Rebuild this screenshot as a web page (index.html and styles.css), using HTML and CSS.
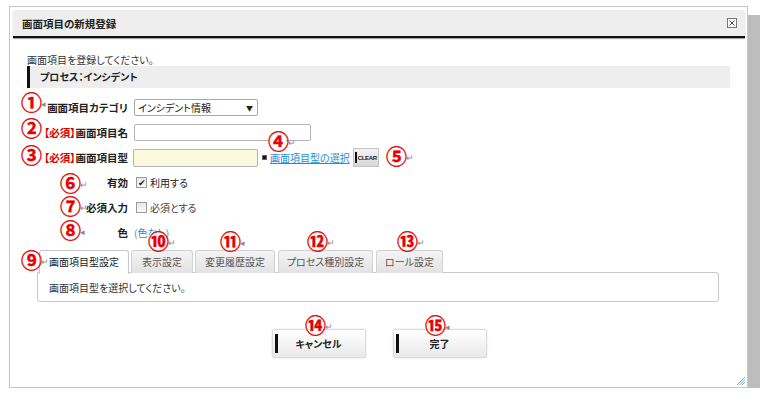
FILE: index.html
```html
<!DOCTYPE html>
<html lang="ja">
<head>
<meta charset="UTF-8">
<title>画面項目の新規登録</title>
<link rel="stylesheet" href="styles.css">
</head>
<body>
<div class="dialog">
    <div class="titlebar">
        <span class="title">画面項目の新規登録</span>
        <svg class="close" width="10" height="10" viewBox="0 0 10 10">
            <rect x="0.5" y="0.5" width="9" height="9" fill="#fafafa" stroke="#777"/>
            <path d="M2.5 2.5 L7.5 7.5 M7.5 2.5 L2.5 7.5" stroke="#444" stroke-width="1"/>
        </svg>
    </div>
    <div class="body">
        <p class="intro">画面項目を登録してください。</p>
        <div class="section">プロセス：インシデント</div>

        <div class="form">
            <div class="row">
                <div class="label">画面項目カテゴリ</div>
                <div class="field">
                    <div class="select"><span>インシデント情報</span><span class="arrow">▼</span></div>
                </div>
            </div>
            <div class="row">
                <div class="label"><span class="req">【必須】</span>画面項目名</div>
                <div class="field"><input type="text" class="text-input"></div>
            </div>
            <div class="row">
                <div class="label"><span class="req">【必須】</span>画面項目型</div>
                <div class="field">
                    <input type="text" class="text-input type-input">
                    <span class="bullet"></span>
                    <a href="#" class="link">画面項目型の選択</a>
                    <span class="clear-btn">CLEAR</span>
                </div>
            </div>
            <div class="row">
                <div class="label">有効</div>
                <div class="field"><span class="check checked">✔</span>利用する</div>
            </div>
            <div class="row">
                <div class="label">必須入力</div>
                <div class="field"><span class="check"></span><span class="muted">必須とする</span></div>
            </div>
            <div class="row">
                <div class="label">色</div>
                <div class="field"><span class="color-link">(色なし)</span></div>
            </div>
        </div>

        <div class="tabs">
            <div class="tab active tab-type">画面項目型設定</div>
            <div class="tab tab-view">表示設定</div>
            <div class="tab tab-history">変更履歴設定</div>
            <div class="tab tab-process">プロセス種別設定</div>
            <div class="tab tab-role">ロール設定</div>
        </div>
        <div class="panel">画面項目型を選択してください。</div>

        <div class="buttons">
            <div class="btn">キャンセル</div>
            <div class="btn">完了</div>
        </div>
    </div>

    <svg class="grip" width="10" height="10" viewBox="0 0 10 10">
        <path d="M9 1 L1 9 M9 3.5 L3.5 9 M9 6 L6 9" stroke="#5fb0e0" stroke-width="1"/>
    </svg>

    <!-- annotation markers -->
    <div class="mark n1"><span class="num">①</span><i>◂</i></div>
    <div class="mark n2"><span class="num">②</span></div>
    <div class="mark n3"><span class="num">③</span></div>
    <div class="mark n4"><span class="num">④</span><i>↵</i></div>
    <div class="mark n5"><span class="num">⑤</span><i>↵</i></div>
    <div class="mark n6"><span class="num">⑥</span><i>↵</i></div>
    <div class="mark n7"><span class="num">⑦</span><i>↵</i></div>
    <div class="mark n8"><span class="num">⑧</span><i>◂</i></div>
    <div class="mark n9"><span class="num">⑨</span><i>↵</i></div>
    <div class="mark n10"><span class="num">⑩</span><i>↵</i></div>
    <div class="mark n11"><span class="num">⑪</span><i>◂</i></div>
    <div class="mark n12"><span class="num">⑫</span><i>↵</i></div>
    <div class="mark n13"><span class="num">⑬</span><i>↵</i></div>
    <div class="mark n14"><span class="num">⑭</span><i>↵</i></div>
    <div class="mark n15"><span class="num">⑮</span><i>◂</i></div>
</div>
</body>
</html>
```

FILE: styles.css
```css
* {
    box-sizing: border-box;
}
body {
    margin: 0;
    background: #fff;
    color: #222;
    font-family: "Noto Sans CJK JP", sans-serif;
    font-size: 10px;
    font-feature-settings: "palt";
}

/* dialog frame */
.dialog {
    position: relative;
    width: 739px;
    height: 382px;
    margin: 6px 0 0 9px;
    padding: 3px 2px 0 3px;
    border: 1px solid #c6c6c6;
    background: #fff;
    box-shadow: 11px 10px 0 1px #bdbdbd;
}
.titlebar {
    display: flex;
    align-items: center;
    justify-content: space-between;
    height: 28px;
    padding: 0 8px 0 9px;
    background: #eeeeee;
    border-radius: 3px 3px 0 0;
    border-bottom: 2px solid #111;
    box-shadow: 0 1px 1px #999;
}
.title {
    font-weight: bold;
    font-size: 10.5px;
}
.body {
    padding: 15px 15px 0 14px;
}
.intro {
    margin: 0;
    height: 13px;
    line-height: 13px;
    color: #333;
}
.section {
    height: 22px;
    line-height: 22px;
    padding-left: 10px;
    background: #eeeeee;
    border-left: 3px solid #111;
    font-weight: bold;
}

/* form rows */
.form {
    margin-top: 7px;
}
.row {
    display: grid;
    grid-template-columns: 101px 1fr;
    column-gap: 6px;
    align-items: center;
    height: 25px;
}
.label {
    text-align: right;
    font-weight: bold;
    font-size: 10.5px;
}
.req {
    color: #d40000;
}
.field {
    display: flex;
    align-items: center;
}
.select {
    display: flex;
    align-items: center;
    justify-content: space-between;
    width: 124px;
    height: 17px;
    padding: 0 4px 0 3px;
    border: 1px solid #a8a8a8;
    border-radius: 2px;
    background: #fff;
}
.select .arrow {
    font-size: 7px;
}
.text-input {
    width: 177px;
    height: 17px;
    margin: 0;
    padding: 0 3px;
    border: 1px solid #b4b4b4;
    border-radius: 2px;
    font-family: inherit;
    font-size: 10px;
}
.type-input {
    width: 125px;
    height: 18px;
    margin-left: -1px;
    background: #fbf9dc;
}
.bullet {
    width: 5px;
    height: 5px;
    margin: 0 3px 0 4px;
    background: #111;
    border: 1px solid #666;
}
.link {
    color: #1e90d8;
    text-decoration: underline;
}
.clear-btn {
    position: relative;
    width: 26px;
    height: 19px;
    margin-left: 3px;
    padding-left: 4px;
    line-height: 19px;
    background: linear-gradient(#f4f4f4, #d8d8d8);
    border: 1px solid #c4c4c4;
    font-family: "Liberation Sans", sans-serif;
    font-size: 6px;
    font-weight: bold;
    letter-spacing: -0.3px;
    overflow: hidden;
}
.clear-btn::before {
    content: "";
    position: absolute;
    left: 1px;
    top: 3px;
    width: 2px;
    height: 11px;
    background: #111;
}
.check {
    display: inline-flex;
    align-items: center;
    justify-content: center;
    width: 11px;
    height: 11px;
    margin: 0 3px 0 2px;
    border: 1px solid #9a9a9a;
    background: linear-gradient(#e8e8e8, #fafafa);
    font-size: 9px;
    line-height: 1;
    color: #222;
}
.muted {
    color: #444;
}
.color-link {
    color: #1e90d8;
}

/* tabs */
.tabs {
    display: flex;
    gap: 2px;
    margin: 5px 0 0 12px;
    height: 23px;
}
.tab {
    height: 23px;
    line-height: 22px;
    text-align: center;
    color: #555;
    background: linear-gradient(#f4f4f4, #e2e2e2);
    border: 1px solid #d2d2d2;
    border-bottom: none;
    border-radius: 3px 3px 0 0;
}
.tab-type { width: 90px; }
.tab-view { width: 62px; }
.tab-history { width: 80px; }
.tab-process { width: 95px; margin-left: 1px; }
.tab-role { width: 67px; margin-left: 1px; }
.tab.active {
    position: relative;
    height: 24px;
    color: #222;
    background: #fff;
    border-color: #c8c8c8;
    z-index: 1;
}
.panel {
    height: 30px;
    line-height: 30px;
    margin: -1px 11px 0 10px;
    padding-left: 11px;
    border: 1px solid #c8c8c8;
    border-radius: 0 3px 3px 3px;
    color: #333;
}

/* bottom buttons */
.buttons {
    display: flex;
    justify-content: center;
    gap: 27px;
    margin-top: 27px;
    padding-left: 1px;
}
.btn {
    position: relative;
    width: 94px;
    height: 29px;
    line-height: 28px;
    text-align: center;
    font-weight: bold;
    background: linear-gradient(#ffffff, #e9e9e9);
    border: 1px solid #dcdcdc;
    border-radius: 2px;
    box-shadow: 0 0 2px rgba(0, 0, 0, 0.15);
}
.btn::before {
    content: "";
    position: absolute;
    left: 2px;
    top: 4px;
    width: 3px;
    height: 19px;
    background: #111;
}

.grip {
    position: absolute;
    right: 1px;
    bottom: 1px;
}

/* numbered annotation markers laid over the screenshot */
.mark {
    position: absolute;
    display: flex;
    align-items: flex-end;
    z-index: 2;
}
.mark .num {
    display: block;
    width: 18px;
    height: 18px;
    line-height: 18px;
    text-align: center;
    font-size: 21px;
    font-weight: bold;
    color: #e60000;
    -webkit-text-stroke: 0.4px #e60000;
    background: #fff;
    border-radius: 50%;
}
.mark i {
    font-style: normal;
    font-size: 9px;
    line-height: 9px;
    color: #888;
    margin: 0 0 2px 2px;
}
.n1 { left: 11px; top: 85px; }
.n2 { left: 11px; top: 111px; }
.n3 { left: 11px; top: 138px; }
.n4 { left: 258px; top: 124px; }
.n5 { left: 376px; top: 139px; }
.n6 { left: 50px; top: 166px; }
.n7 { left: 50px; top: 189px; }
.n8 { left: 50px; top: 213px; }
.n9 { left: 11px; top: 243px; }
.n10 { left: 138px; top: 224px; }
.n11 { left: 210px; top: 224px; }
.n12 { left: 297px; top: 224px; }
.n13 { left: 387px; top: 224px; }
.n14 { left: 295px; top: 308px; }
.n15 { left: 415px; top: 308px; }
```
